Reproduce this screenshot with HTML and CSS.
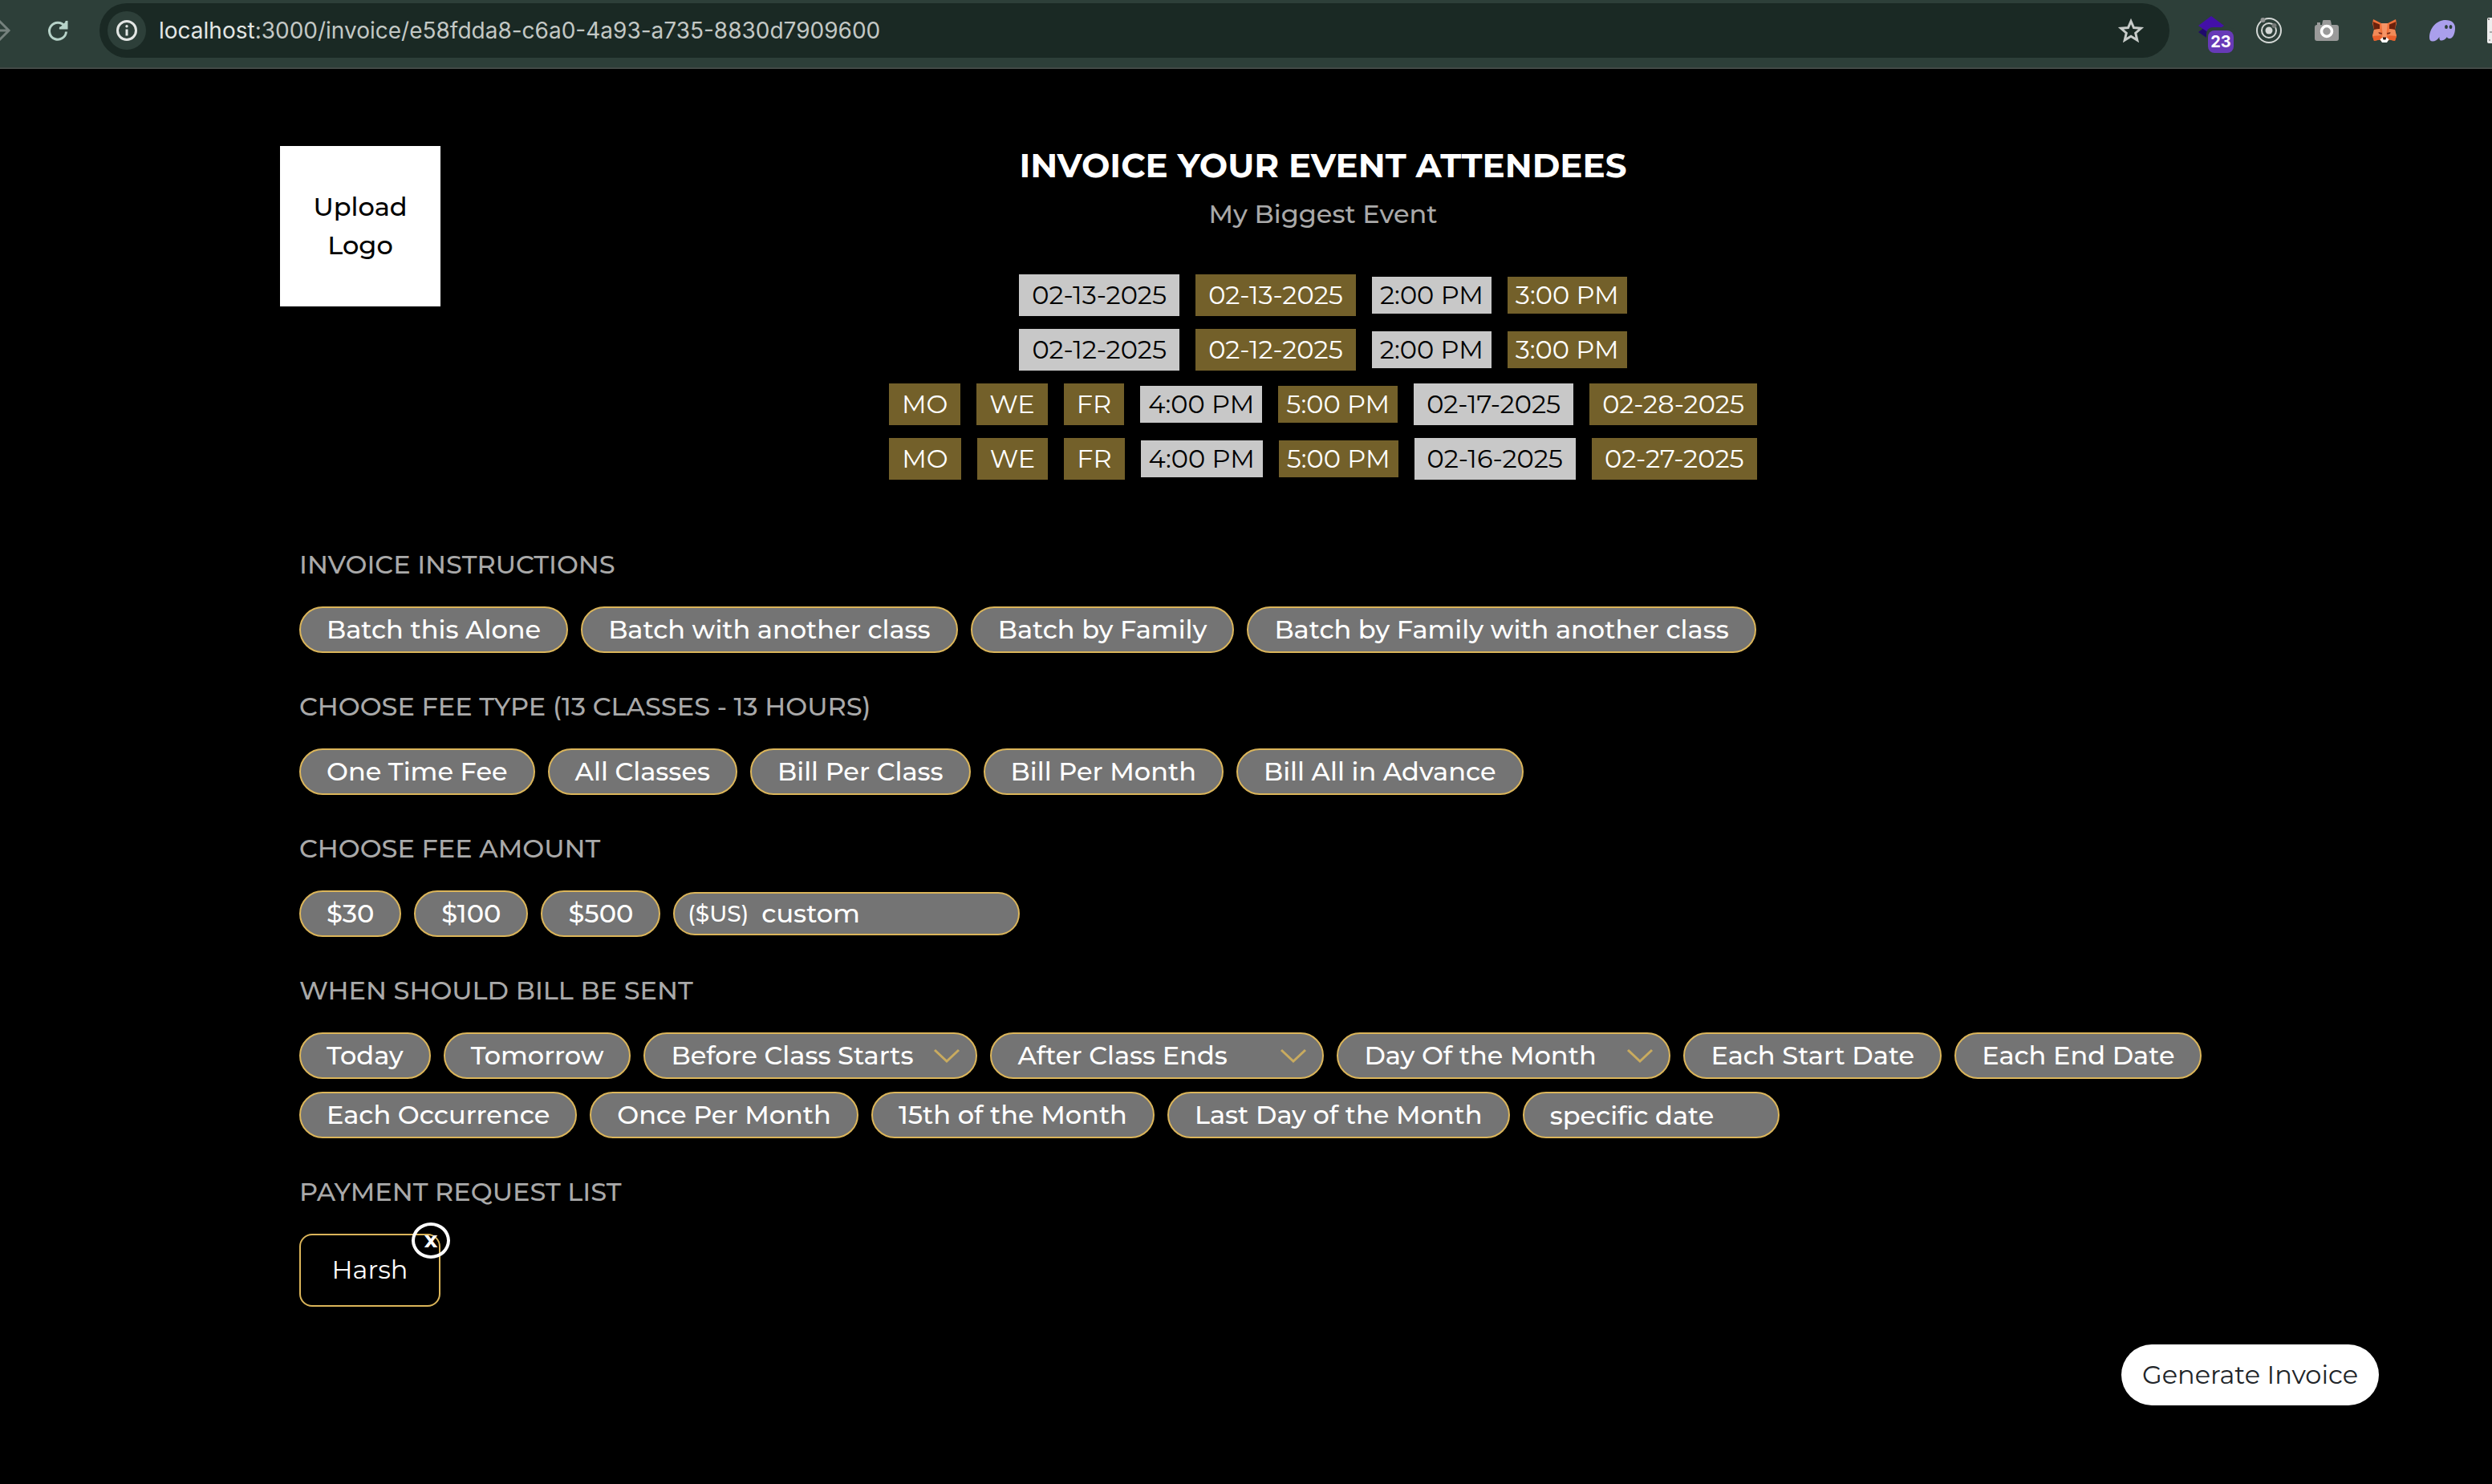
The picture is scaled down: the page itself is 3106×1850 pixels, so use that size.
FILE: index.html
```html
<!DOCTYPE html>
<html lang="en">
<head>
<meta charset="utf-8">
<title>Invoice</title>
<link rel="stylesheet" href="styles.css">
</head>
<body>
<header class="toolbar">
  <button class="tool forward" aria-label="Forward"><svg width="32" height="32" viewBox="0 0 32 32" fill="none" stroke="#75817d" stroke-width="3"><path d="M4 16H30M19 4L31 16L19 28"/></svg></button>
  <button class="tool reload" aria-label="Reload"><svg width="28" height="28" viewBox="0 0 28 28" fill="none" stroke="#b6d2c8" stroke-width="3"><path d="M22.500 8.500A10.500 10.500 0 1 0 24.500 15.500"/><path d="M25 2V11H16" stroke-width="3"/><path d="M24 5V10H19Z" fill="#b6d2c8"/></svg></button>
  <div class="address">
    <button class="site-info" aria-label="Site information"><svg width="28" height="28" viewBox="0 0 28 28"><circle cx="14" cy="14" r="11.500" fill="none" stroke="#e3e6e4" stroke-width="3"/><path d="M14 12.500V20.500" stroke="#e3e6e4" stroke-width="3"/><circle cx="14" cy="8.800" r="1.700" fill="#e3e6e4"/></svg></button>
    <p class="url"><span class="host">localhost</span>:3000/invoice/e58fdda8-c6a0-4a93-a735-8830d7909600</p>
    <button class="tool star" aria-label="Bookmark"><svg width="32" height="32" viewBox="0 0 32 32" fill="none" stroke="#c7cbc9" stroke-width="3"><path d="M16 4.500L19.500 12.500L28.500 13.300L21.700 19.200L23.800 28L16 23.300L8.200 28L10.300 19.200L3.500 13.300L12.500 12.500Z"/></svg></button>
  </div>
  <nav class="extensions">
    <button class="tool" aria-label="Layers"><svg width="36" height="48" viewBox="0 0 36 48"><path d="M4 26L20 37L36 26L20 14Z" fill="#1f0a6b"/><path d="M4 18L20 6L36 18L20 29Z" fill="#4310a8"/><rect x="14" y="20" width="36" height="32" rx="8" fill="#2d3f39"/></svg><span class="badge">23</span></button>
    <button class="tool" aria-label="Target"><svg width="32" height="32" viewBox="0 0 32 32" fill="none" stroke="#d4d8d6" stroke-width="2"><circle cx="16" cy="16" r="15"/><circle cx="16" cy="16" r="9"/><circle cx="16" cy="16" r="4.500" fill="#d4d8d6" stroke="none"/><circle cx="8.500" cy="3" r="3" fill="#929594" stroke="none"/><circle cx="22.500" cy="10" r="3" fill="#777c7a" stroke="none"/></svg></button>
    <button class="tool" aria-label="Camera"><svg width="32" height="32" viewBox="0 0 32 32"><path d="M4 9V6H8V9H10L11 4Q11 3 12.500 3H19.500Q21 3 21 4L22 9H28Q31 9 31 12V26Q31 29 28 29H4Q1 29 1 26V12Q1 9 4 9Z" fill="#9a9a9a"/><circle cx="16" cy="17" r="6.500" fill="#9a9a9a" stroke="#fff" stroke-width="3.500"/></svg></button>
    <button class="tool" aria-label="Wallet"><svg width="32" height="32" viewBox="0 0 32 32"><path d="M2 2L12 7H20L30 2L31 7L29 15L31 23L29 29L22 27.500L19 30H13L10 27.500L3 29L1 23L3 15L1 7Z" fill="#f0713a"/><path d="M1.500 5L10 8.500L10 14L3 15Z" fill="#6b210c"/><path d="M30.500 5L22 8.500L22 14L29 15Z" fill="#6b210c"/><path d="M12 7H20L18.500 19L19 25H13L13.500 19Z" fill="#f59467"/><path d="M3 15L10 14L12 22L1 23Z" fill="#f08a58"/><path d="M29 15L22 14L20 22L31 23Z" fill="#f08a58"/><path d="M1 23L11 22.500L12 27L3 29Z" fill="#e8602c"/><path d="M31 23L21 22.500L20 27L29 29Z" fill="#e8602c"/><path d="M10.500 27L13.500 25H18.500L21.500 27L19 31H13Z" fill="#fff"/><path d="M13.800 24.500H18.200L17.500 27.500H14.500Z" fill="#2b1410"/><path d="M8.500 18L13 19L12.500 21L9 20Z" fill="#7a2c18"/><path d="M23.500 18L19 19L19.500 21L23 20Z" fill="#7a2c18"/></svg></button>
    <button class="tool" aria-label="Ghost"><svg width="32" height="32" viewBox="0 0 32 32"><path d="M0 25C0 13 9 3 20 3C28 3 32 7 32 13C32 20 29 26 25.500 26C23.500 26 22 25.500 22 24C20 27 17 28.500 15 28.500C13 28.500 12 27 12.500 24C10 28 7 29.500 4 29.500C1.500 29.500 0 28 0 25Z" fill="#aa9fec"/><ellipse cx="21" cy="11.500" rx="1.900" ry="2.500" fill="#2d3f39"/><ellipse cx="26.500" cy="11.500" rx="1.900" ry="2.500" fill="#2d3f39"/></svg></button>
    <button class="tool" aria-label="Document"><svg width="32" height="32" viewBox="0 0 32 32"><rect width="32" height="32" rx="2" fill="#eee"/><circle cx="2" cy="2" r="1" fill="#555"/><path d="M3 18H8M2 28H4" stroke="#aaa" stroke-width="2"/></svg></button>
  </nav>
</header>

<main>
  <div class="container">
    <div class="intro">
      <button class="upload">Upload<br>Logo</button>
      <div class="event">
        <h1>INVOICE YOUR EVENT ATTENDEES</h1>
        <p class="subtitle">My Biggest Event</p>
        <div class="schedule">
          <div class="slot"><span class="tag light">02-13-2025</span><span class="tag">02-13-2025</span><span class="tag time light">2:00 PM</span><span class="tag time">3:00 PM</span></div>
          <div class="slot"><span class="tag light">02-12-2025</span><span class="tag">02-12-2025</span><span class="tag time light">2:00 PM</span><span class="tag time">3:00 PM</span></div>
          <div class="slot"><span class="tag">MO</span><span class="tag">WE</span><span class="tag">FR</span><span class="tag time light">4:00 PM</span><span class="tag time">5:00 PM</span><span class="tag light">02-17-2025</span><span class="tag">02-28-2025</span></div>
          <div class="slot"><span class="tag">MO</span><span class="tag">WE</span><span class="tag">FR</span><span class="tag time light">4:00 PM</span><span class="tag time">5:00 PM</span><span class="tag light">02-16-2025</span><span class="tag">02-27-2025</span></div>
        </div>
      </div>
    </div>

    <form class="options">
      <section>
        <h2>INVOICE INSTRUCTIONS</h2>
        <div class="row"><button type="button" class="pill">Batch this Alone</button><button type="button" class="pill">Batch with another class</button><button type="button" class="pill">Batch by Family</button><button type="button" class="pill">Batch by Family with another class</button></div>
      </section>
      <section>
        <h2>CHOOSE FEE TYPE (13 CLASSES - 13 HOURS)</h2>
        <div class="row"><button type="button" class="pill">One Time Fee</button><button type="button" class="pill">All Classes</button><button type="button" class="pill">Bill Per Class</button><button type="button" class="pill">Bill Per Month</button><button type="button" class="pill">Bill All in Advance</button></div>
      </section>
      <section>
        <h2>CHOOSE FEE AMOUNT</h2>
        <div class="row"><button type="button" class="pill">$30</button><button type="button" class="pill">$100</button><button type="button" class="pill">$500</button>
          <div class="custom"><label for="amount">($US)</label><input id="amount" type="text" placeholder="custom"></div></div>
      </section>
      <section>
        <h2>WHEN SHOULD BILL BE SENT</h2>
        <div class="row"><button type="button" class="pill">Today</button><button type="button" class="pill">Tomorrow</button>
          <div class="choice"><select class="pill" aria-label="Before class starts"><option>Before Class Starts</option></select><svg width="34" height="18" viewBox="0 0 34 18"><path d="M2 2L17 16L32 2"/></svg></div>
          <div class="choice"><select class="pill" aria-label="After class ends"><option>After Class Ends</option></select><svg width="34" height="18" viewBox="0 0 34 18"><path d="M2 2L17 16L32 2"/></svg></div>
          <div class="choice"><select class="pill" aria-label="Day of the month"><option>Day Of the Month</option></select><svg width="34" height="18" viewBox="0 0 34 18"><path d="M2 2L17 16L32 2"/></svg></div>
          <button type="button" class="pill">Each Start Date</button><button type="button" class="pill">Each End Date</button>
          <button type="button" class="pill">Each Occurrence</button><button type="button" class="pill">Once Per Month</button><button type="button" class="pill">15th of the Month</button><button type="button" class="pill">Last Day of the Month</button><input class="pill specific" type="text" placeholder="specific date" aria-label="Specific date"></div>
      </section>
      <section>
        <h2>PAYMENT REQUEST LIST</h2>
        <div class="row"><div class="payer">Harsh<button type="button" class="remove" aria-label="Remove Harsh">x</button></div></div>
      </section>
    </form>
  </div>
  <div class="actions"><button class="generate">Generate Invoice</button></div>
</main>
</body>
</html>
```
FILE: styles.css
```css
* { box-sizing: border-box; }
body {
  margin: 0;
  background: #000;
  color: #fff;
  font: 400 32px/48px Montserrat, Inter, sans-serif;
}
button, input, select { font: inherit; color: inherit; margin: 0; border: 0; background: none; padding: 0; }
h1, h2, p { margin: 0; }
svg { display: block; flex: none; overflow: visible; }

.toolbar {
  display: flex;
  align-items: flex-start;
  height: 86px;
  padding-top: 4px;
  background: #2d3f39;
  border-bottom: 2px solid #434a47;
  overflow: hidden;
}
.tool { position: relative; flex: none; display: flex; align-items: center; justify-content: center; height: 68px; }
.forward { margin-left: -20px; }
.reload { width: 112px; padding-left: 8px; }
.address {
  flex: 1;
  display: flex;
  align-items: center;
  height: 68px;
  padding: 0 32px 0 10px;
  border-radius: 34px;
  background: #1a2924;
}
.site-info { width: 48px; height: 48px; padding: 10px; border-radius: 50%; background: #2d3f39; }
.url { flex: 1; padding-left: 16px; font: 400 28px/40px Inter, sans-serif; color: #c3c8c5; }
.host { color: #e3e6e4; }
.extensions { display: flex; gap: 40px; width: 402px; padding-left: 32px; }
.badge {
  position: absolute;
  left: 16px;
  top: 34px;
  width: 32px;
  height: 28px;
  border-radius: 8px;
  background: #673ab7;
  color: #fff;
  font: 700 20px/28px Inter, sans-serif;
  text-align: center;
}

.container { width: min(100% - 64px, 2408px); margin: 0 auto; padding-top: 96px; }
.intro { display: grid; grid-template-columns: 200px 1fr; align-items: start; padding-right: 8px; }
.upload { height: 200px; background: #fff; color: #000; font-weight: 500; }
.event { display: flex; flex-direction: column; align-items: center; text-align: center; }
h1 { font-size: 42px; font-weight: 700; line-height: 48px; }
.subtitle { padding-top: 13px; color: #a9a9a9; font-weight: 500; }
.schedule { display: grid; gap: 16px; padding-top: 51px; }
.slot { display: flex; flex-wrap: wrap; align-items: center; justify-content: center; gap: 20px; }
.tag { padding: 0 16px; line-height: 52px; background: #73602a; white-space: nowrap; }
.tag.light { background: #c8c8c8; color: #000; }
.tag.time { padding: 0 10px; line-height: 46px; }

.options { display: grid; gap: 43px; padding: 82px 0 0 24px; }
h2 { font-size: 32px; line-height: 48px; font-weight: 500; color: #a9a9a9; }
.row { display: flex; flex-wrap: wrap; align-items: center; gap: 16px; padding-top: 28px; }
.pill {
  height: 58px;
  padding: 0 32px;
  border: 2px solid #dbb55a;
  border-radius: 29px;
  background: #747474;
  color: #fff;
  font-weight: 500;
  white-space: nowrap;
}
::placeholder { color: #fff; opacity: 1; }
.custom {
  display: flex;
  align-items: center;
  gap: 16px;
  width: 432px;
  height: 54px;
  padding: 0 16px;
  border: 2px solid #dbb55a;
  border-radius: 27px;
  background: #747474;
}
.custom label { font-size: 28px; font-weight: 500; }
.custom input { flex: 1; min-width: 0; font-weight: 500; }
.choice { display: grid; align-items: center; width: 416px; }
.choice > * { grid-area: 1 / 1; }
.choice select { appearance: none; width: 100%; }
.choice svg { justify-self: end; margin-right: 21px; fill: none; stroke: #c9ab5f; stroke-width: 3; pointer-events: none; }
.specific { width: 320px; }
.payer {
  position: relative;
  min-width: 176px;
  padding: 19px 0 20px;
  border: 2px solid #dbb55a;
  border-radius: 16px;
  line-height: 48px;
  text-align: center;
}
.remove {
  position: absolute;
  top: -16px;
  right: -14px;
  width: 48px;
  height: 45px;
  padding-bottom: 4px;
  border: 4px solid #fff;
  border-radius: 50%;
  font-size: 28px;
  font-weight: 700;
  line-height: 32px;
}
.actions { display: flex; justify-content: flex-end; padding: 47px 141px 96px 64px; }
.generate { height: 76px; min-width: 321px; border-radius: 38px; background: #fff; color: #212529; }
```
